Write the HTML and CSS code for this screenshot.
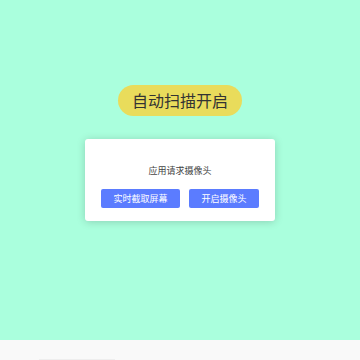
FILE: index.html
```html
<!DOCTYPE html>
<html lang="zh-CN">
<head>
  <meta charset="UTF-8" />
  <meta name="viewport" content="width=device-width, initial-scale=1.0" />
  <title>自动扫描</title>
  <link rel="stylesheet" href="styles.css">
</head>
<body>
  <div class="page">
    <div class="scan-tag">自动扫描开启</div>
    <div class="dialog">
      <p class="dialog-title">应用请求摄像头</p>
      <div class="dialog-buttons">
        <button class="blue-button">实时截取屏幕</button>
        <button class="blue-button">开启摄像头</button>
      </div>
    </div>
  </div>
  <div class="footer"><span class="footer-line"></span></div>
</body>
</html>
```

FILE: styles.css
```css
html, body {
  margin: 0;
  padding: 0;
}
body {
  font-family: "Noto Sans CJK SC", "Noto Sans", sans-serif;
  background-color: #aaffdd;
  color: #333;
  height: 360px;
  overflow: hidden;
}
.page {
  height: 340px;
  display: flex;
  flex-direction: column;
  align-items: center;
  padding-top: 85px;
  box-sizing: border-box;
}
.scan-tag {
  background-color: #e9dc5b;
  color: #333;
  font-size: 16px;
  height: 31px;
  line-height: 31px;
  padding: 0 14px;
  border-radius: 16px;
}
.dialog {
  margin-top: 23px;
  width: 190px;
  height: 82px;
  box-sizing: border-box;
  background: white;
  border-radius: 3px;
  box-shadow: 0 1px 8px rgba(0, 0, 0, 0.18);
  padding-top: 26px;
}
.dialog-title {
  margin: 0;
  text-align: center;
  font-size: 9px;
  line-height: 12px;
  color: #444;
}
.dialog-buttons {
  display: flex;
  justify-content: center;
  gap: 9px;
  margin-top: 12px;
}
.blue-button {
  font-family: inherit;
  background-color: #5b7cff;
  color: white;
  border: none;
  border-radius: 2px;
  font-size: 9px;
  height: 19px;
  padding: 0 12.5px;
  line-height: 19px;
}
.footer {
  height: 20px;
  background-color: #f9f9f9;
  position: relative;
}
.footer-line {
  position: absolute;
  left: 39px;
  bottom: 0;
  width: 76px;
  height: 1px;
  background: #eee;
}
```
